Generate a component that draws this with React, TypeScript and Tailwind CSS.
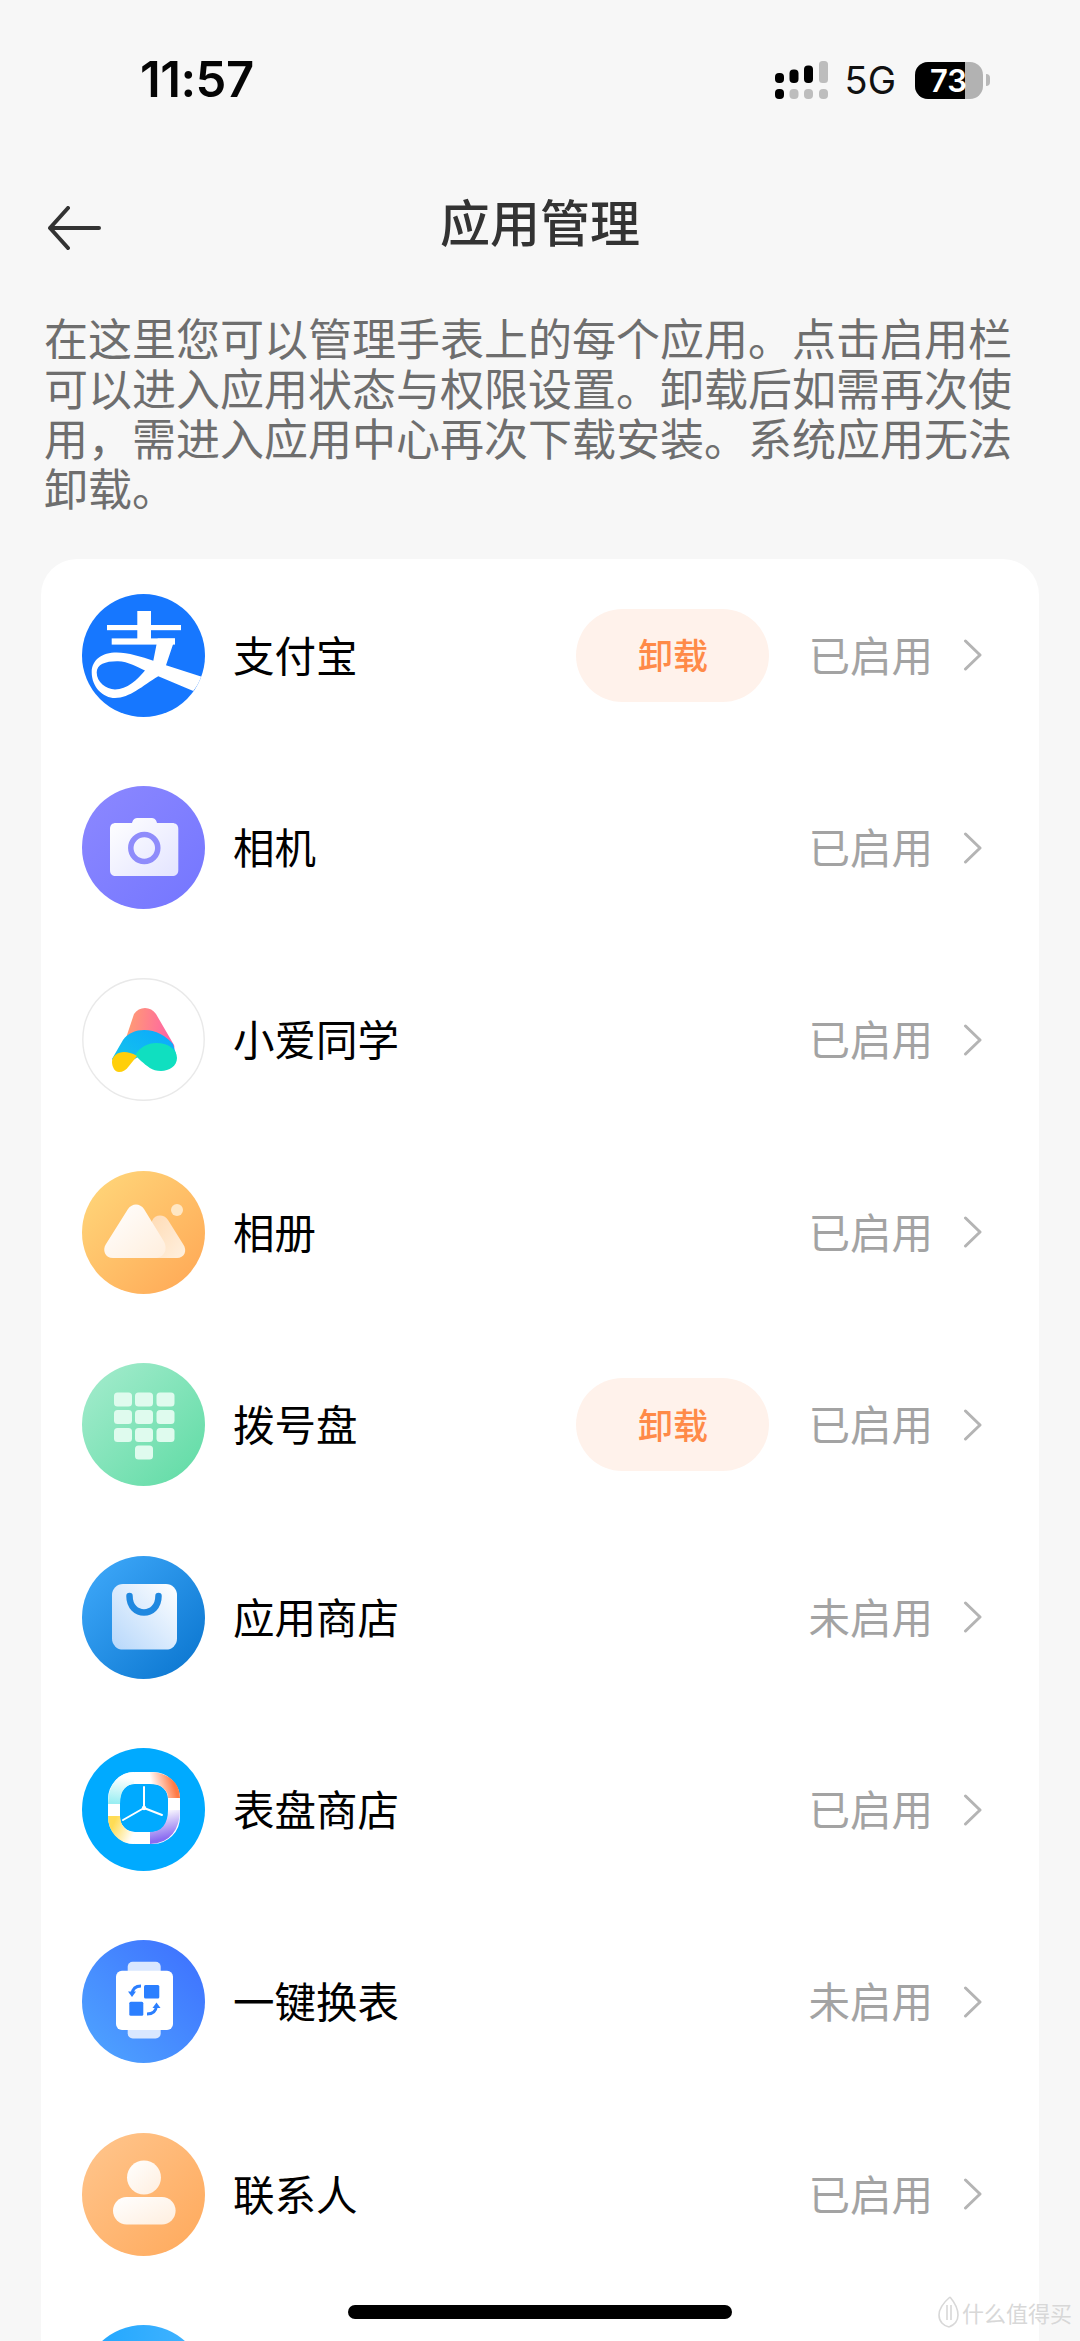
// 应用管理 页面
function Grad({ id, from, to, x1 = 0, y1 = 0, x2 = 1, y2 = 1 }: { id: string; from: string; to: string; x1?: number; y1?: number; x2?: number; y2?: number }) {
  return (
    <linearGradient id={id} x1={x1} y1={y1} x2={x2} y2={y2}>
      <stop offset="0" stopColor={from} />
      <stop offset="1" stopColor={to} />
    </linearGradient>
  );
}

function IconSvg({ children }: { children: React.ReactNode }) {
  return (
    <svg viewBox="0 0 123 123" className="w-[123px] h-[123px] shrink-0">
      {children}
    </svg>
  );
}

function AlipayIcon() {
  return (
    <IconSvg>
      <defs>
        <clipPath id="alipayClip">
          <circle cx="61.5" cy="61.5" r="61.5" />
        </clipPath>
      </defs>
      <circle cx="61.5" cy="61.5" r="61.5" fill="#1677ff" />
      <g clipPath="url(#alipayClip)" fill="#fff">
        <rect x="55.3" y="17" width="13.7" height="28" />
        <rect x="25" y="31" width="74" height="5.2" />
        <rect x="29.7" y="44.4" width="63.3" height="6.2" />
        <path d="M93 44.4 L75.7 44.4 L71.3 66.8 C60 63 46 58.6 34.7 58.6 C20 58.6 9.7 66 9.7 78.2 C9.7 93 21 104 33 104 C48 104 60 92 76.3 82.3 L111.3 97.1 L121.3 83.3 L84 71.3 Z" />
      </g>
      <path d="M63 76.5 C56 73 46 67.5 36 67.2 C24 67 14.7 70 14.7 78.5 C14.7 88 24 95.4 33 95.4 C45 95.4 55 86 63 76.5 Z" fill="#1677ff" />
    </IconSvg>
  );
}

function CameraIcon() {
  return (
    <IconSvg>
      <defs>
        <Grad id="camBg" from="#8c88ff" to="#7476ff" />
        <Grad id="camBody" from="#ffffff" to="#e3e4ff" />
      </defs>
      <circle cx="61.5" cy="61.5" r="61.5" fill="url(#camBg)" />
      <path d="M34 37 H50 C51 33 53 32 56 32 H69 C72 32 74 33 75 37 H90 C94 37 96.3 39 96.3 43 V84 C96.3 88 94 90 90 90 H34 C30 90 28 88 28 84 V43 C28 39 30 37 34 37 Z" fill="url(#camBody)" />
      <circle cx="62.3" cy="62" r="13.5" fill="none" stroke="#8f8cfb" strokeWidth="5.5" />
    </IconSvg>
  );
}

function XiaoaiIcon() {
  return (
    <IconSvg>
      <defs>
        <Grad id="aiPink" from="#ffa26e" to="#ff5fa8" x1={0} y1={0.4} x2={1} y2={0.5} />
        <Grad id="aiBlue" from="#16c7e8" to="#0aa8ff" x1={0} y1={1} x2={1} y2={0} />
      </defs>
      <circle cx="61.5" cy="61.5" r="60.7" fill="#fff" stroke="#e9e9e9" strokeWidth="1.4" />
      <path d="M52 36 C57 28 69 28 74 36 L92 67 C94 72 88 78 80 76 L40 72 Z" fill="url(#aiPink)" />
      <path d="M30 81 L41 62 C46 55 54 52 62 52 C74 52 84 58 91 66 L94 76 L56 79 L38 90 Z" fill="url(#aiBlue)" />
      <path d="M53 77 C58 69 66 65 74 65 C86 65 95 71 95 80 C95 88 87 93 79 93 C70 93 65 88 59 83 Z" fill="#10dfc0" />
      <path d="M30 84 C30 78 36 74 42 74 C46 74 50 75 55 78 L47 88 C44 92 41 94 37 94 C33 94 30 89 30 84 Z" fill="#ffcf0a" />
    </IconSvg>
  );
}

function AlbumIcon() {
  return (
    <IconSvg>
      <defs>
        <Grad id="albBg" from="#ffd97c" to="#ffa654" />
        <Grad id="albBig" from="#ffffff" to="#ffeedd" />
        <Grad id="albSmall" from="#ffdcb6" to="#fff0df" />
      </defs>
      <circle cx="61.5" cy="61.5" r="61.5" fill="url(#albBg)" />
      <circle cx="95" cy="39" r="6" fill="#ffe7c4" />
      <path d="M70 50 C73 43 82 43 86 49 L101 73 C106 80 102 87 95 87 H70 Z" fill="url(#albSmall)" />
      <path d="M46 38 C50 32 58 32 62 38 L81 69 C87 78 82 87 73 87 H31 C23 87 20 79 24 73 Z" fill="url(#albBig)" />
    </IconSvg>
  );
}

function DialIcon() {
  const keys = [
    [32, 29.6], [53, 29.6], [74.5, 29.6],
    [32, 47], [53, 47], [74.5, 47],
    [32, 65], [53, 65], [74.5, 65],
    [53, 82.6],
  ];
  return (
    <IconSvg>
      <defs>
        <Grad id="dialBg" from="#a6ecce" to="#5edba4" />
      </defs>
      <circle cx="61.5" cy="61.5" r="61.5" fill="url(#dialBg)" />
      {keys.map(([x, y]) => (
        <rect key={`${x}-${y}`} x={x} y={y} width="18" height="14" rx="3.5" fill="#dffbee" />
      ))}
    </IconSvg>
  );
}

function StoreIcon() {
  return (
    <IconSvg>
      <defs>
        <Grad id="storeBg" from="#41abfc" to="#0873cd" />
        <Grad id="storeBag" from="#ffffff" to="#b6d7fb" x1={1} y1={0} x2={0} y2={1} />
      </defs>
      <circle cx="61.5" cy="61.5" r="61.5" fill="url(#storeBg)" />
      <rect x="30" y="28" width="65" height="65.6" rx="11" fill="url(#storeBag)" />
      <path d="M47.5 40 C47.5 62 76.5 62 76.5 40" fill="none" stroke="#1f88e0" strokeWidth="6.5" strokeLinecap="round" />
    </IconSvg>
  );
}

function WatchFaceIcon() {
  return (
    <IconSvg>
      <defs>
        <Grad id="wfOrange" from="#ffffff" to="#ff7a45" x1={0.1} y1={0.5} x2={1} y2={0.3} />
        <Grad id="wfPurple" from="#ffffff" to="#8a6cf0" x1={0.5} y1={0} x2={0.7} y2={1} />
        <Grad id="wfYellow" from="#ffdc55" to="#ffffff" x1={0} y1={0.3} x2={1} y2={0.8} />
        <Grad id="wfCyan" from="#ffffff" to="#9aeef2" x1={0.6} y1={0} x2={0.5} y2={1} />
      </defs>
      <circle cx="61.5" cy="61.5" r="61.5" fill="#00aaff" />
      <rect x="32" y="30" width="60" height="60" rx="21" fill="none" stroke="#fff" strokeWidth="12" />
      <path d="M68 30 C82 30 92 38 92 50" fill="none" stroke="url(#wfOrange)" strokeWidth="12" />
      <path d="M92 62 C92 78 84 90 68 90" fill="none" stroke="url(#wfPurple)" strokeWidth="12" />
      <path d="M32 68 C32 80 40 90 52 90" fill="none" stroke="url(#wfYellow)" strokeWidth="12" />
      <path d="M52 30 C40 30 32 40 32 56" fill="none" stroke="url(#wfCyan)" strokeWidth="12" />
      <path d="M62 60 V39 M62 60 L41 72 M62 60 L80 67" fill="none" stroke="#fff" strokeWidth="2" strokeLinecap="round" />
      <circle cx="62" cy="60" r="2.2" fill="#fff" />
    </IconSvg>
  );
}

function SwapIcon() {
  return (
    <IconSvg>
      <defs>
        <Grad id="swapBg" from="#4fa6ff" to="#3d6eff" x1={0} y1={1} x2={1} y2={0} />
      </defs>
      <circle cx="61.5" cy="61.5" r="61.5" fill="url(#swapBg)" />
      <rect x="45.7" y="21.7" width="33" height="76.7" rx="5" fill="#d9e7ff" />
      <rect x="34" y="30.7" width="57" height="59.3" rx="6" fill="#fff" />
      <rect x="62" y="45" width="15.3" height="13.4" rx="1.5" fill="#2b7fff" />
      <rect x="47.3" y="61.7" width="14" height="14" rx="1.5" fill="#2b7fff" />
      <path d="M59 46 C53 46 50.5 49 50 54" fill="none" stroke="#2b7fff" strokeWidth="2.8" />
      <path d="M46 51.5 L54 51.5 L50 57 Z" fill="#2b7fff" />
      <path d="M65 74 C71 74 74 71 74.5 66" fill="none" stroke="#2b7fff" strokeWidth="2.8" />
      <path d="M70.5 68 L78.5 68 L74.5 62.5 Z" fill="#2b7fff" />
    </IconSvg>
  );
}

function ContactIcon() {
  return (
    <IconSvg>
      <defs>
        <Grad id="conBg" from="#ffc68e" to="#ffa95b" />
        <Grad id="conFg" from="#ffffff" to="#ffeede" />
      </defs>
      <circle cx="61.5" cy="61.5" r="61.5" fill="url(#conBg)" />
      <circle cx="62" cy="44.5" r="17" fill="url(#conFg)" />
      <rect x="31" y="64" width="62.6" height="27.5" rx="13.7" fill="url(#conFg)" />
    </IconSvg>
  );
}

function BlueIcon() {
  return (
    <IconSvg>
      <defs>
        <Grad id="blueBg" from="#1ea6ff" to="#45b4ff" x1={0} y1={0} x2={1} y2={0} />
      </defs>
      <circle cx="61.5" cy="61.5" r="61.5" fill="url(#blueBg)" />
    </IconSvg>
  );
}

const apps = [
  { name: "支付宝", status: "已启用", canRemove: true, icon: <AlipayIcon /> },
  { name: "相机", status: "已启用", canRemove: false, icon: <CameraIcon /> },
  { name: "小爱同学", status: "已启用", canRemove: false, icon: <XiaoaiIcon /> },
  { name: "相册", status: "已启用", canRemove: false, icon: <AlbumIcon /> },
  { name: "拨号盘", status: "已启用", canRemove: true, icon: <DialIcon /> },
  { name: "应用商店", status: "未启用", canRemove: false, icon: <StoreIcon /> },
  { name: "表盘商店", status: "已启用", canRemove: false, icon: <WatchFaceIcon /> },
  { name: "一键换表", status: "未启用", canRemove: false, icon: <SwapIcon /> },
  { name: "联系人", status: "已启用", canRemove: false, icon: <ContactIcon /> },
  { name: "", status: "", canRemove: false, icon: <BlueIcon /> },
];

function SignalIcon() {
  return (
    <svg viewBox="0 0 53 38" className="w-[53px] h-[38px]">
      <rect x="0" y="12" width="9" height="10" rx="4" fill="#000" />
      <rect x="14.5" y="8.5" width="9" height="13.5" rx="4" fill="#000" />
      <rect x="29" y="4.5" width="9" height="17.5" rx="4" fill="#000" />
      <rect x="44" y="0" width="9" height="22" rx="3.5" fill="#bdbdbd" />
      <rect x="0" y="28" width="9" height="10" rx="4" fill="#000" />
      <rect x="14.5" y="28" width="9" height="10" rx="4" fill="#bdbdbd" />
      <rect x="29" y="28" width="9" height="10" rx="4" fill="#bdbdbd" />
      <rect x="44" y="28" width="9" height="10" rx="4" fill="#bdbdbd" />
    </svg>
  );
}

export default function App() {
  return (
    <div className="relative h-[2341px] w-[1080px] overflow-hidden bg-[#f7f7f7] font-['Noto_Sans_CJK_SC',sans-serif]">
      {/* 状态栏 */}
      <div className="flex h-[160px] items-start justify-between pl-[140px] pr-[90px] pt-[54px]">
        <span className="font-['Inter',sans-serif] text-[49px] font-semibold leading-[52px] tracking-[-0.5px] text-[#050505]">11:57</span>
        <div className="flex items-center pt-[7px]">
          <SignalIcon />
          <span className="ml-[17px] font-['Inter',sans-serif] text-[38px] leading-[38px] text-[#111]">5G</span>
          <div className="relative ml-[19px] flex h-[37px] w-[68px] overflow-hidden rounded-[13px] bg-[#b2b2b2]">
            <div className="w-[50px] bg-black" />
            <span className="absolute left-[15px] top-0 font-['Inter',sans-serif] text-[31px] font-semibold leading-[37px] text-white">73</span>
          </div>
          <div className="ml-[3px] h-[12px] w-[4px] rounded-r-full bg-[#b8b8b8]" />
        </div>
      </div>

      {/* 标题 */}
      <div className="relative flex h-[152px] items-center justify-center pb-[32px]">
        <svg viewBox="0 0 54 44" className="absolute left-[47px] top-[46px] h-[44px] w-[54px]">
          <path d="M52 22 H3 M21 2 L3 22 L21 42" fill="none" stroke="#333" strokeWidth="4" strokeLinecap="round" strokeLinejoin="round" />
        </svg>
        <h1 className="text-[50px] font-medium leading-[60px] text-[#333]">应用管理</h1>
      </div>

      {/* 说明文字 */}
      <p className="ml-[44px] w-[990px] text-[44px] leading-[50px] text-[#6e6e6e]">
        在这里您可以管理手表上的每个应用。点击启用栏可以进入应用状态与权限设置。卸载后如需再次使用，需进入应用中心再次下载安装。系统应用无法卸载。
      </p>

      {/* 应用列表 */}
      <div className="ml-[41px] mt-[47px] w-[998px] rounded-t-[36px] bg-white">
        {apps.map((app, i) => (
          <div key={i} className="flex h-[192.4px] items-center pl-[41px] pr-[56px]">
            {app.icon}
            <span className="ml-[28px] flex-1 pb-[3px] text-[41.5px] leading-[48px] text-black">{app.name}</span>
            {app.canRemove && (
              <div className="mr-[39px] flex h-[93px] w-[193px] items-center justify-center rounded-full bg-[#fff2eb] pb-[2px] text-[35px] font-medium text-[#ff8a48]">
                卸载
              </div>
            )}
            {app.status && (
              <>
                <span className="pb-[3px] text-[41.5px] leading-[48px] text-[#a3a3a3]">{app.status}</span>
                <svg viewBox="0 0 20 32" className="ml-[30px] h-[32px] w-[20px]">
                  <path d="M2.5 2 L17 16 L2.5 30" fill="none" stroke="#b4b4b4" strokeWidth="3" strokeLinecap="round" strokeLinejoin="round" />
                </svg>
              </>
            )}
          </div>
        ))}
      </div>

      {/* 底部横条 */}
      <div className="absolute bottom-[22px] left-[348px] h-[14px] w-[384px] rounded-full bg-black" />

      {/* 水印 */}
      <div className="absolute bottom-[12px] right-[8px] flex items-center gap-[2px] text-[#d8d8d8]">
        <svg viewBox="0 0 24 34" className="h-[34px] w-[24px]">
          <path d="M14 2 C7 8 3 14 3 20 C3 27 8 31 13 32 M14 2 C19 8 22 14 22 20 C22 26 18 30 13 32" fill="none" stroke="#d8d8d8" strokeWidth="1.6" />
          <path d="M11 10 V25 M15 10 V25" fill="none" stroke="#d8d8d8" strokeWidth="1.6" />
        </svg>
        <span className="text-[22px] leading-[28px]">什么值得买</span>
      </div>
    </div>
  );
}
